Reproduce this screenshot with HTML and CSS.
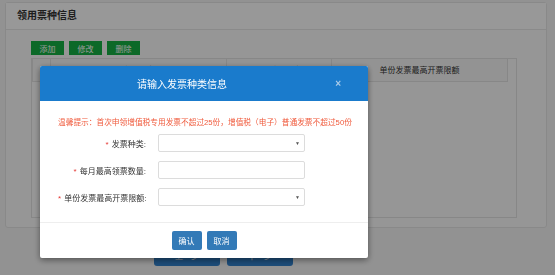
FILE: index.html
```html
<!DOCTYPE html>
<html lang="zh-CN">

<head>
    <meta charset="UTF-8">
    <title>领用票种信息</title>
    <link rel="stylesheet" href="styles.css">
</head>

<body>
    <div class="panel">
        <div class="panel-header">领用票种信息</div>
        <div class="panel-body">
            <div class="toolbar">
                <button class="btn-green">添加</button>
                <button class="btn-green">修改</button>
                <button class="btn-green">删除</button>
            </div>
            <div class="table-box">
                <table class="grid">
                    <thead>
                        <tr>
                            <th class="col-check"></th>
                            <th class="col-type">发票种类</th>
                            <th class="col-num">每月最高领票数量</th>
                            <th class="col-limit">单份发票最高开票限额</th>
                        </tr>
                    </thead>
                </table>
            </div>
        </div>
    </div>

    <div class="page-actions">
        <button class="btn-dark">上一步</button>
        <button class="btn-dark">下一步</button>
    </div>

    <div class="mask"></div>

    <div class="modal">
        <div class="modal-header">
            <span class="modal-title">请输入发票种类信息</span>
            <span class="modal-close">×</span>
        </div>
        <div class="modal-body">
            <p class="tip">温馨提示：首次申领增值税专用发票不超过25份，增值税（电子）普通发票不超过50份</p>
            <div class="form">
                <label><span class="star">*</span> 发票种类:</label>
                <div class="field select"><span class="arrow">▼</span></div>
                <label><span class="star">*</span> 每月最高领票数量:</label>
                <div class="field"></div>
                <label><span class="star">*</span> 单份发票最高开票限额:</label>
                <div class="field select"><span class="arrow">▼</span></div>
            </div>
        </div>
        <div class="modal-footer">
            <button class="btn-blue">确认</button>
            <button class="btn-blue">取消</button>
        </div>
    </div>
</body>

</html>
```

FILE: styles.css
```css
* {
    margin: 0;
    padding: 0;
    box-sizing: border-box;
    font-family: "Liberation Sans", "Noto Sans CJK SC", sans-serif;
}

body {
    background-color: #f3f3f3;
    width: 555px;
    height: 275px;
    overflow: hidden;
    padding: 2px 8px 0 5px;
}

button {
    border: none;
    color: white;
    font-size: 8px;
    cursor: pointer;
}

.panel {
    background-color: #fbfbfb;
    border: 1px solid #e4e4e4;
    border-radius: 3px;
    height: 226px;
}

.panel-header {
    height: 27px;
    line-height: 26px;
    padding-left: 11px;
    font-size: 10px;
    font-weight: bold;
    color: #333;
    border-bottom: 1px solid #e6e6e6;
    background-color: #fdfdfd;
}

.panel-body {
    padding: 11px 29px 0 25px;
}

.toolbar {
    display: flex;
    gap: 5px;
    height: 14px;
}

.btn-green {
    width: 33px;
    height: 14px;
    background-color: #14b043;
}

.table-box {
    margin-top: 3px;
    height: 160px;
    border: 1px solid #e2e2e2;
    padding-right: 10px;
}

.grid {
    border-collapse: collapse;
    width: 476px;
}

.grid th {
    height: 22px;
    font-size: 8px;
    font-weight: normal;
    color: #333;
    background-color: #f6f6f6;
    border: 1px solid #e2e2e2;
    border-top: none;
}

.col-check {
    width: 18px;
}

.col-type {
    width: 176px;
}

.col-num {
    width: 105px;
}

.page-actions {
    display: flex;
    gap: 7px;
    padding-left: 149px;
    margin-top: 16px;
}

.btn-dark {
    width: 66px;
    height: 22px;
    border-radius: 3px;
    background-color: #3080cb;
}

.mask {
    position: fixed;
    inset: 0;
    background-color: rgba(0, 0, 0, 0.4);
}

.modal {
    position: fixed;
    left: 40px;
    top: 66px;
    width: 328px;
    background-color: white;
    border-radius: 2px;
    box-shadow: 0 2px 6px rgba(0, 0, 0, 0.45);
}

.modal-header {
    position: relative;
    height: 35px;
    background-color: #1a7bcc;
    border-radius: 2px 2px 0 0;
    padding-left: 97px;
    line-height: 33px;
}

.modal-title {
    color: white;
    font-size: 10px;
}

.modal-close {
    position: absolute;
    right: 27px;
    top: 1px;
    color: #a9cbea;
    font-size: 10px;
    font-weight: bold;
}

.modal-body {
    padding: 16px 0 16px 18px;
}

.tip {
    color: #f05a3c;
    font-size: 7.7px;
    line-height: 12px;
    margin-bottom: 5px;
    white-space: nowrap;
}

.form {
    display: grid;
    grid-template-columns: 88px 147px;
    column-gap: 12px;
    row-gap: 9px;
    align-items: center;
}

.form label {
    text-align: right;
    font-size: 8px;
    color: #333;
    white-space: nowrap;
}

.star {
    color: #e53935;
    margin-right: 1px;
}

.field {
    position: relative;
    height: 18px;
    border: 1px solid #dcdcdc;
    border-radius: 2px;
    background-color: white;
}

.arrow {
    position: absolute;
    right: 4px;
    top: 5px;
    font-size: 5px;
    color: #555;
}

.modal-footer {
    border-top: 1px solid #eeeeee;
    padding: 8px 0;
    display: flex;
    justify-content: center;
    gap: 5px;
}

.btn-blue {
    width: 30px;
    height: 19px;
    border-radius: 2px;
    background-color: #337ab7;
}
```
